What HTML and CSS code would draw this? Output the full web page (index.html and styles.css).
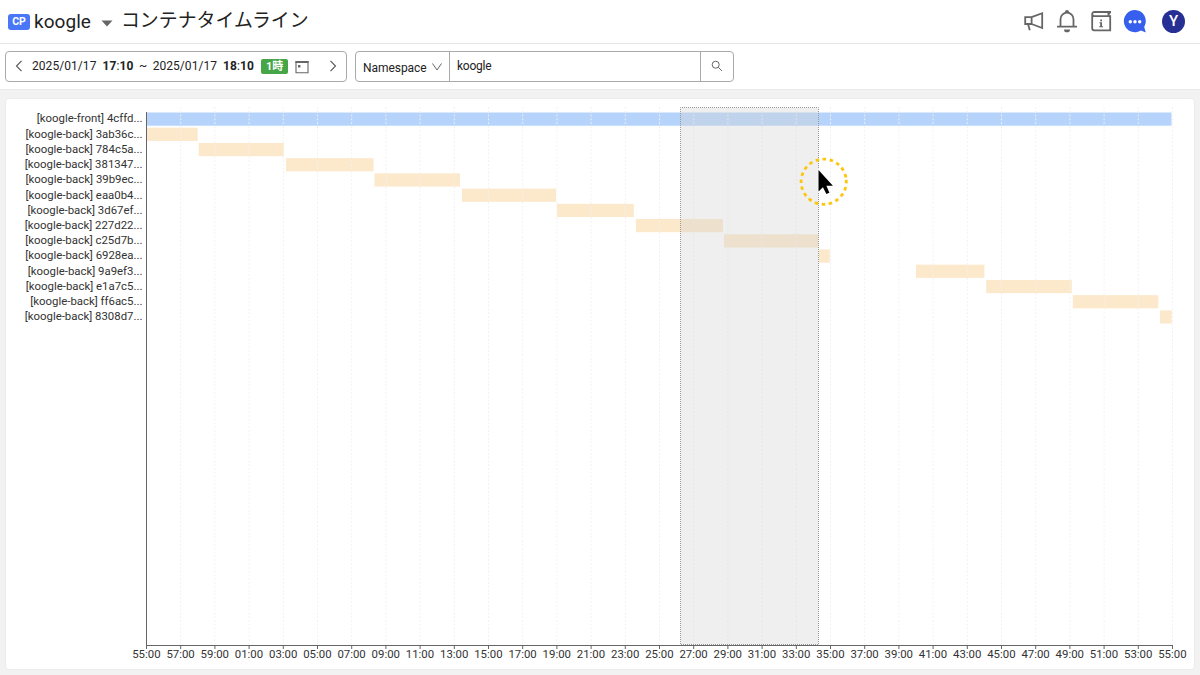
FILE: index.html
```html
<!DOCTYPE html>
<html lang="ja">
<head>
<meta charset="utf-8">
<title>コンテナタイムライン</title>
<link rel="stylesheet" href="styles.css">
</head>
<body>
<header class="header">
  <span class="badge">CP</span>
  <span class="project">koogle</span>
  <svg class="caret" width="12" height="7" viewBox="0 0 12 7"><path d="M.5 .5h11L6 6.5z" fill="#666"/></svg>
  <h1 class="title">コンテナタイムライン</h1>
  <div class="actions">
    <svg width="24" height="24" viewBox="0 0 24 24" fill="none" stroke="#666" stroke-width="1.8"><path d="M4.2 8.2h6.4v6.8H4.2zM10.6 8.2l10.6-4v14.8l-10.6-4M7 15l1.8 6.2"/></svg>
    <svg width="24" height="24" viewBox="0 0 24 24" fill="none" stroke="#666" stroke-width="1.8"><path d="M2 17.6h20M5.5 17.6V10.2a6.5 6.5 0 0 1 13 0v7.4"/><path d="M9 20.4h6a3 2.9 0 0 1-6 0zM10 4V3a2 2 0 0 1 4 0v1z" fill="#666" stroke="none"/></svg>
    <svg width="24" height="24" viewBox="0 0 24 24" fill="none" stroke="#666" stroke-width="1.8"><path d="M22 3H5.2a2 2 0 0 0-2 2v14.3a2 2 0 0 0 2 2h16V7.1H5.2a2 2 0 0 1-2-2"/><path d="M11.2 10.6h1.8v1.6h-1.8zM10.4 13.2h2.6v4h1v1.1h-3.8v-1.1h1v-2.9h-.8zM18.5 3h3v1.6l-1.2 1 1.2 1.2h-3z" fill="#666" stroke="none"/></svg>
    <svg width="24" height="24" viewBox="0 0 24 24"><path d="M12 .9a11.2 11.2 0 1 0 6 20.7l4.8 1.9-1.6-5.6A11.2 11.2 0 0 0 12 .9z" fill="#355fec"/><g fill="#fff"><circle cx="7.3" cy="12.7" r="1.7"/><circle cx="12" cy="12.7" r="1.7"/><circle cx="16.7" cy="12.7" r="1.7"/></g></svg>
    <span class="avatar">Y</span>
  </div>
</header>

<div class="toolbar">
  <div class="range">
    <svg class="prev" width="8" height="12" viewBox="0 0 8 12"><path d="M6.5 .8 1.5 6l5 5.2" fill="none" stroke="#555" stroke-width="1.1"/></svg>
    <span class="date">2025/01/17</span>
    <span class="time"><b>17</b>:<b>10</b></span>
    <span class="tilde">~</span>
    <span class="date">2025/01/17</span>
    <span class="time"><b>18</b>:<b>10</b></span>
    <span class="span">1時</span>
    <svg class="calendar" width="14" height="14" viewBox="0 0 14 14"><path d="M1 1.5h12v11.3H1z" fill="none" stroke="#666" stroke-width="1.1"/><path d="M.5 1h13v2H.5zM3 5h2.4v2.4H3z" fill="#666"/></svg>
    <svg class="next" width="8" height="12" viewBox="0 0 8 12"><path d="M1.5 .8l5 5.2-5 5.2" fill="none" stroke="#555" stroke-width="1.1"/></svg>
  </div>
  <div class="search">
    <div class="select"><span>Namespace</span><svg width="10" height="8" viewBox="0 0 10 8"><path d="M.5 .5 5 7 9.5 .5" fill="none" stroke="#666"/></svg></div>
    <div class="query">koogle</div>
    <div class="go"><svg width="12" height="12" viewBox="0 0 12 12" fill="none" stroke="#666"><circle cx="4.7" cy="4.7" r="3.5"/><path d="M7.3 7.3 11 11"/></svg></div>
  </div>
</div>

<main class="content">
  <section class="panel">
    <svg class="chart" id="chart" width="1188" height="570" viewBox="6 99 1188 570"></svg>
  </section>
</main>
<script src="chart.js"></script>
</body>
</html>
```
FILE: styles.css
```css
* { box-sizing: border-box; }
body {
  margin: 0;
  width: 1200px;
  height: 675px;
  overflow: hidden;
  display: flex;
  flex-direction: column;
  background: #f2f2f2;
  color: #222;
  font-family: Roboto, "Noto Sans CJK JP", sans-serif;
}
.header {
  height: 44px;
  flex: none;
  display: flex;
  align-items: center;
  padding: 0 15px 0 8px;
  background: #fff;
  border-bottom: 1px solid #e6e6e6;
}
.badge {
  width: 22px;
  height: 16px;
  border-radius: 3px;
  background: #4a76f8;
  color: #fff;
  font-size: 10.5px;
  font-weight: 700;
  line-height: 16px;
  text-align: center;
}
.project { margin-left: 4px; font-size: 19px; letter-spacing: .05px; line-height: 43px; }
.caret { margin: 3px 8px 0 10px; }
.title { margin: 0; padding-bottom: 2px; font-size: 18.9px; font-weight: 400; line-height: 36px; }
.actions { margin-left: auto; display: flex; align-items: center; gap: 10.2px; padding-bottom: 2px; }
.avatar {
  margin: 1px 0 0 4.5px;
  width: 23px;
  height: 23px;
  border-radius: 50%;
  background: #263094;
  color: #fff;
  font-size: 15px;
  font-weight: 500;
  line-height: 23px;
  text-align: center;
}
.toolbar {
  height: 46px;
  flex: none;
  display: flex;
  align-items: flex-start;
  gap: 8px;
  padding: 7px 5px 0;
  background: #fff;
  border-bottom: 1px solid #e9e9e9;
}
.range, .search {
  height: 31px;
  display: flex;
  align-items: center;
  border: 1px solid #aaa;
  border-radius: 4px;
  font-size: 12px;
}
.range { width: 342px; padding: 0 9px 1px; }
.date { letter-spacing: .06px; }
.prev { margin-right: 9px; }
.time { margin-left: 6px; letter-spacing: .1px; }
.tilde { margin: 0 5.5px; }
.span {
  margin-left: 7px;
  width: 27px;
  height: 15px;
  border-radius: 2px;
  background: #46a546;
  color: #fff;
  font-size: 11px;
  font-weight: 700;
  line-height: 15px;
  text-align: center;
}
.calendar { margin: 1px 0 0 7px; }
.next { margin-left: auto; }
.search { width: 379px; }
.select {
  width: 94px;
  height: 29px;
  display: flex;
  align-items: center;
  justify-content: space-between;
  padding: 2px 7px 0 7px;
  border-right: 1px solid #aaa;
}
.select span { letter-spacing: -.05px; }
.select svg { margin-bottom: 2px; }
.query { flex: 1; padding: 0 0 1px 7px; letter-spacing: -.3px; }
.query { letter-spacing: -.25px; }
.go {
  width: 33px;
  height: 29px;
  display: flex;
  align-items: center;
  justify-content: center;
  padding-bottom: 1px;
  border-left: 1px solid #aaa;
}
.content { flex: 1; padding: 9px 6px 6px; }
.panel { height: 570px; border-radius: 3px; background: #fff; box-shadow: 0 0 1px 1px #ebebeb; }
.chart { display: block; font-size: 11.4px; fill: #333; }
.label { text-anchor: end; }
.tick { text-anchor: middle; }
.bar-front { fill: #b5d3fb; }
.bar-back { fill: #fce9cb; }
.grid { stroke: #f1f1f1; stroke-width: 1; stroke-dasharray: 1.9 1.9; }
.axis { stroke: #666; stroke-width: 1; fill: none; }
.selection { fill: #d2d2d2; fill-opacity: .36; stroke: #999; stroke-dasharray: 1 1; stroke-dashoffset: .5; }
.ring { fill: none; stroke: #fdc50b; stroke-width: 2.8; stroke-dasharray: 3.5 3.6; }
```
FILE: chart.js
```js
const rows = [
  ['[koogle-front] 4cffd...', 146.5, 1171.5],
  ['[koogle-back] 3ab36c...', 146.5, 197.7],
  ['[koogle-back] 784c5a...', 198.7, 283.8],
  ['[koogle-back] 381347...', 286, 373.5],
  ['[koogle-back] 39b9ec...', 374.5, 460],
  ['[koogle-back] eaa0b4...', 462, 556],
  ['[koogle-back] 3d67ef...', 557, 633.8],
  ['[koogle-back] 227d22...', 635.8, 723],
  ['[koogle-back] c25d7b...', 724, 818.5],
  ['[koogle-back] 6928ea...', 819, 829.8],
  ['[koogle-back] 9a9ef3...', 916, 984.4],
  ['[koogle-back] e1a7c5...', 986.2, 1071.8],
  ['[koogle-back] ff6ac5...', 1072.8, 1158.3],
  ['[koogle-back] 8308d7...', 1160, 1171.7]
];
const step = 34.2;
const left = 146.5;
let bars = '', grid = '', ticks = '', labels = '';

rows.forEach(([name, start, end], i) => {
  const mid = 119.1 + i * 15.22;
  bars += `<rect class="${i ? 'bar-back' : 'bar-front'}" x="${start}" y="${mid - 6.6}" width="${end - start}" height="13.2"/>`;
  labels += `<text class="label" x="142.5" y="${mid + 3.3}">${name}</text>`;
});
for (let i = 0; i <= 30; i++) {
  const x = left + i * step;
  const minute = String((55 + i * 2) % 60).padStart(2, '0');
  if (i) grid += `<path class="grid" d="M${x} 107V645"/>`;
  ticks += `<path class="axis" d="M${x} 645v4"/><text class="tick" x="${x - 0.1}" y="658.2">${minute}:00</text>`;
}
document.getElementById('chart').innerHTML = bars + grid +
  '<path class="axis" d="M146.5 112V645.5H1172.5"/>' + ticks + labels +
  '<rect class="selection" x="680.5" y="107.5" width="138" height="537"/>' +
  '<circle class="ring" cx="823.7" cy="181.7" r="22.6" transform="rotate(-4.4 823.7 181.7)"/>' +
  '<path d="M818.5 170v21.5l4.4-4.2 3.5 6.8 3-1.3-3-7.1h6.5z" fill="#000" stroke="#fff" stroke-width="1.4" paint-order="stroke"/>';
```
